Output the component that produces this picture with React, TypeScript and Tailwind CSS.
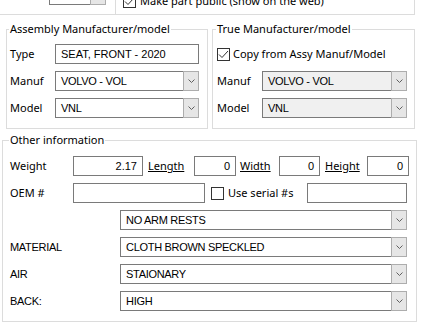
import React from 'react';

function Chevron() {
  return (
    <svg width="7" height="4" viewBox="0 0 7 4">
      <polyline points="0.5,0.5 3.5,3.5 6.5,0.5" fill="none" stroke="#606060" strokeWidth="1" />
    </svg>
  );
}

function Combo({ value, className, disabled }: { value: string; className: string; disabled?: boolean }) {
  return (
    <div className={`flex h-[20px] ${className}`}>
      <div
        className={`flex flex-1 items-center border border-r-0 border-[#7a7a7a] pl-[5px] font-['Liberation_Sans',sans-serif] text-[11px] tracking-[-0.3px] ${
          disabled ? 'bg-[#f0f0f0]' : 'bg-white'
        }`}
      >
        {value}
      </div>
      <div className="flex w-[16px] items-center justify-center border border-[#adadad] bg-[#e6e6e6]">
        <Chevron />
      </div>
    </div>
  );
}

function TextBox({ value, className, right }: { value?: string; className: string; right?: boolean }) {
  return (
    <div
      className={`flex h-[20px] items-center border border-[#7a7a7a] bg-white font-['Liberation_Sans',sans-serif] text-[11px] ${
        right ? 'justify-end pr-[5px]' : 'pl-[5px]'
      } ${className}`}
    >
      {value}
    </div>
  );
}

function CheckBox({ checked }: { checked?: boolean }) {
  return (
    <div className="flex h-[13px] w-[13px] shrink-0 items-center justify-center border border-[#333333] bg-white">
      {checked && (
        <svg width="11" height="9" viewBox="0 0 11 9">
          <polyline points="1,4.5 4,7.5 10,1" fill="none" stroke="#333333" strokeWidth="1" />
        </svg>
      )}
    </div>
  );
}

export default function App() {
  return (
    <div className="h-[322px] w-[433px] overflow-hidden bg-white font-['Noto_Sans',sans-serif] text-[11px] leading-[16px] text-black">
      {/* top strip, mostly scrolled away */}
      <div className="flex h-[15px]">
        <div className="w-[116px] border-r border-b border-[#dcdcdc]">
          <div className="mt-[-15px] ml-[49px] flex h-[20px] w-[57px]">
            <div className="flex-1 border border-r-0 border-[#7a7a7a] bg-white" />
            <div className="w-[16px] border border-[#adadad] bg-[#e6e6e6]" />
          </div>
        </div>
        <div className="w-[299px] border-r border-b border-[#dcdcdc]">
          <div className="mt-[-7px] ml-[7px] flex items-center gap-[4px]">
            <CheckBox checked />
            <span>Make part public (show on the web)</span>
          </div>
        </div>
      </div>

      {/* manufacturer groups */}
      <div className="mt-[6px] flex">
        <fieldset className="ml-[6px] w-[202px] border border-[#dcdcdc] pr-[8px] pb-[10px] pl-[3px]">
          <legend className="ml-[-1px] px-[1px]">Assembly Manufacturer/model</legend>
          <div className="mt-[7px] flex flex-col gap-[7px]">
            <div className="flex items-center">
              <span className="w-[45px]">Type</span>
              <TextBox value="SEAT, FRONT - 2020" className="flex-1" />
            </div>
            <div className="flex items-center">
              <span className="w-[45px]">Manuf</span>
              <Combo value="VOLVO - VOL" className="flex-1" />
            </div>
            <div className="flex items-center">
              <span className="w-[45px]">Model</span>
              <Combo value="VNL" className="flex-1" />
            </div>
          </div>
        </fieldset>

        <fieldset className="ml-[4px] w-[203px] border border-[#dcdcdc] pr-[7px] pb-[10px] pl-[4px]">
          <legend className="ml-[-1px] px-[1px]">True Manufacturer/model</legend>
          <div className="mt-[7px] flex flex-col gap-[7px]">
            <div className="flex h-[20px] items-center gap-[3px]">
              <CheckBox checked />
              <span>Copy from Assy Manuf/Model</span>
            </div>
            <div className="flex items-center">
              <span className="w-[45px]">Manuf</span>
              <Combo value="VOLVO - VOL" className="flex-1" disabled />
            </div>
            <div className="flex items-center">
              <span className="w-[45px]">Model</span>
              <Combo value="VNL" className="flex-1" disabled />
            </div>
          </div>
        </fieldset>
      </div>

      {/* other information */}
      <fieldset className="mt-[3px] ml-[2px] w-[413px] border border-[#dcdcdc] pr-[7px] pb-[10px] pl-[7px]">
        <legend className="ml-[-1px] px-[1px]">Other information</legend>
        <div className="mt-[8px] flex flex-col gap-[7px]">
          <div className="flex items-center">
            <span className="w-[63px]">Weight</span>
            <TextBox value="2.17" right className="w-[70px]" />
            <span className="ml-[5px] w-[46px] underline">Length</span>
            <TextBox value="0" right className="w-[42px]" />
            <span className="ml-[4px] w-[39px] underline">Width</span>
            <TextBox value="0" right className="w-[41px]" />
            <span className="ml-[5px] w-[42px] underline">Height</span>
            <TextBox value="0" right className="w-[42px]" />
          </div>
          <div className="flex items-center">
            <span className="w-[63px]">OEM #</span>
            <TextBox className="w-[132px]" />
            <div className="ml-[6px] flex w-[96px] items-center gap-[4px]">
              <CheckBox />
              <span>Use serial #s</span>
            </div>
            <TextBox className="w-[100px]" />
          </div>
          <div className="flex items-center">
            <span className="w-[110px]" />
            <Combo value="NO ARM RESTS" className="w-[287px]" />
          </div>
          <div className="flex items-center">
            <span className="w-[110px] font-['Liberation_Sans',sans-serif] tracking-[-0.3px]">MATERIAL</span>
            <Combo value="CLOTH BROWN SPECKLED" className="w-[287px]" />
          </div>
          <div className="flex items-center">
            <span className="w-[110px] font-['Liberation_Sans',sans-serif] tracking-[-0.3px]">AIR</span>
            <Combo value="STAIONARY" className="w-[287px]" />
          </div>
          <div className="flex items-center">
            <span className="w-[110px] font-['Liberation_Sans',sans-serif] tracking-[-0.3px]">BACK:</span>
            <Combo value="HIGH" className="w-[287px]" />
          </div>
        </div>
      </fieldset>
    </div>
  );
}
